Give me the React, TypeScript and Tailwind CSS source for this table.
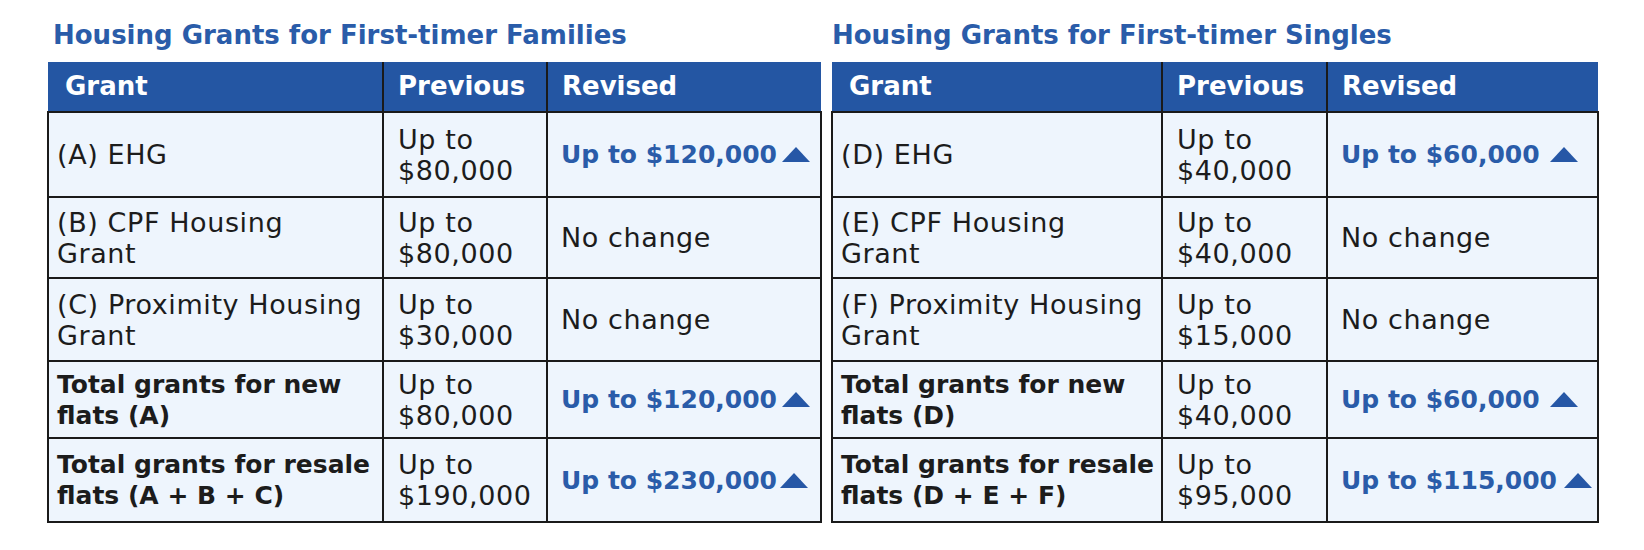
const FONT = { fontFamily: '"DejaVu Sans", "Noto Sans", sans-serif' }

type Row = { grant: string[]; bold?: boolean; prev: string[]; revised: string; up?: boolean; gap?: string; h: string }

const families: Row[] = [
  { grant: ['(A) EHG'], prev: ['Up to', '$80,000'], revised: 'Up to $120,000', up: true, h: 'h-[85px]' },
  { grant: ['(B) CPF Housing', 'Grant'], prev: ['Up to', '$80,000'], revised: 'No change', h: 'h-[81px]' },
  { grant: ['(C) Proximity Housing', 'Grant'], prev: ['Up to', '$30,000'], revised: 'No change', h: 'h-[83px]' },
  { grant: ['Total grants for new', 'flats (A)'], bold: true, prev: ['Up to', '$80,000'], revised: 'Up to $120,000', up: true, h: 'h-[77px]' },
  { grant: ['Total grants for resale', 'flats (A + B + C)'], bold: true, prev: ['Up to', '$190,000'], revised: 'Up to $230,000', up: true, gap: 'ml-[3px]', h: 'h-[84px]' },
]

const singles: Row[] = [
  { grant: ['(D) EHG'], prev: ['Up to', '$40,000'], revised: 'Up to $60,000', up: true, gap: 'ml-[10px]', h: 'h-[85px]' },
  { grant: ['(E) CPF Housing', 'Grant'], prev: ['Up to', '$40,000'], revised: 'No change', h: 'h-[81px]' },
  { grant: ['(F) Proximity Housing', 'Grant'], prev: ['Up to', '$15,000'], revised: 'No change', h: 'h-[83px]' },
  { grant: ['Total grants for new', 'flats (D)'], bold: true, prev: ['Up to', '$40,000'], revised: 'Up to $60,000', up: true, gap: 'ml-[10px]', h: 'h-[77px]' },
  { grant: ['Total grants for resale', 'flats (D + E + F)'], bold: true, prev: ['Up to', '$95,000'], revised: 'Up to $115,000', up: true, gap: 'ml-[7px]', h: 'h-[84px]' },
]

function UpArrow({ gap }: { gap?: string }) {
  return (
    <svg width="28" height="15" viewBox="0 0 28 15" className={`${gap ?? 'ml-[5px]'} shrink-0`}>
      <polygon points="14,0 28,15 0,15" fill="#2657a6" />
    </svg>
  )
}

function GrantTable({ title, titlePad, rows, widths, tableW }: { title: string; titlePad: string; rows: Row[]; widths: [string, string, string]; tableW: string }) {
  return (
    <div>
      <h2 className={`text-[26px] font-bold leading-[34px] text-[#2a5ca9] ${titlePad} mb-[10px]`}>{title}</h2>
      <table className={`border-collapse table-fixed ${tableW} text-[27px] leading-[31px] tracking-[0.6px] text-[#1c1c1c]`}>
        <colgroup>
          <col className={widths[0]} />
          <col className={widths[1]} />
          <col className={widths[2]} />
        </colgroup>
        <thead>
          <tr className="h-[50px] bg-[#2456a3] text-white font-bold text-left text-[26px] tracking-normal">
            <th className="pl-[17px] align-middle">Grant</th>
            <th className="pl-[14px] border-l-2 border-[#1a1a1a] align-middle">Previous</th>
            <th className="pl-[14px] border-l-2 border-[#1a1a1a] align-middle">Revised</th>
          </tr>
        </thead>
        <tbody className="bg-[#eef5fd]">
          {rows.map(r => (
            <tr key={r.grant.join(' ')} className={r.h}>
              <td className={`border-2 border-[#1a1a1a] pl-[8px] align-middle whitespace-nowrap overflow-hidden ${r.bold ? 'font-bold text-[25px] tracking-normal' : ''}`}>
                {r.grant.map(g => <div key={g}>{g}</div>)}
              </td>
              <td className="border-2 border-[#1a1a1a] pl-[14px] align-middle whitespace-nowrap overflow-hidden">
                {r.prev.map(p => <div key={p}>{p}</div>)}
              </td>
              <td className="border-2 border-[#1a1a1a] pl-[13px] align-middle">
                {r.up ? (
                  <div className="flex items-center font-bold text-[25px] tracking-normal text-[#2a5ca9] whitespace-nowrap">
                    <span>{r.revised}</span>
                    <UpArrow gap={r.gap} />
                  </div>
                ) : (
                  <span>{r.revised}</span>
                )}
              </td>
            </tr>
          ))}
        </tbody>
      </table>
    </div>
  )
}

export default function App() {
  return (
    <div className="w-[1644px] h-[550px] bg-white overflow-hidden" style={FONT}>
      <div className="flex gap-[9px] pl-[47px] pt-[18px]">
        <GrantTable title="Housing Grants for First-timer Families" titlePad="pl-[6px]" rows={families} tableW="w-[773px]" widths={['w-[335px]', 'w-[164px]', 'w-[274px]']} />
        <GrantTable title="Housing Grants for First-timer Singles" titlePad="pl-[1px]" rows={singles} tableW="w-[766px]" widths={['w-[330px]', 'w-[165px]', 'w-[271px]']} />
      </div>
    </div>
  )
}
